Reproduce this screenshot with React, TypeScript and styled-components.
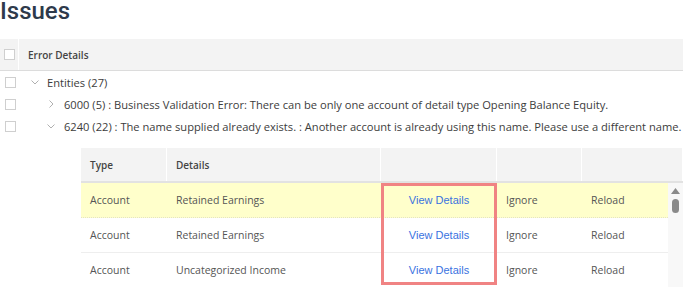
import React from 'react';
import styled, { createGlobalStyle } from 'styled-components';

const GlobalStyle = createGlobalStyle`
  body {
    margin: 0;
    background: #fff;
    overflow: hidden;
  }
`;

const Page = styled.div`
  width: 683px;
  height: 287px;
  overflow: hidden;
  font-family: 'Open Sans', sans-serif;
  color: #444;
`;

const Title = styled.h1`
  margin: 0;
  height: 39px;
  font-family: Roboto, sans-serif;
  font-weight: 500;
  font-size: 24px;
  line-height: 22px;
  color: #2e3a4b;
`;

const GridHeader = styled.div`
  display: flex;
  align-items: stretch;
  height: 31px;
  background: #f3f3f3;
  border-bottom: 1px solid #dcdcdc;
`;

const CheckCell = styled.div<{ divider?: boolean }>`
  width: 19px;
  flex: none;
  display: flex;
  align-items: center;
  padding-left: ${p => (p.divider ? 4 : 5)}px;
  box-sizing: border-box;
  border-right: ${p => (p.divider ? '1px solid #fff' : 'none')};
`;

const Checkbox = styled.span`
  display: block;
  width: 11px;
  height: 11px;
  box-sizing: border-box;
  border: 1px solid #cfcfcf;
  background: #fff;
`;

const HeaderLabel = styled.div`
  display: flex;
  align-items: center;
  padding-left: 9px;
  font-size: 10px;
  font-weight: 600;
  color: #444;
`;

const TreeRow = styled.div`
  display: flex;
  align-items: center;
  height: 22px;
  font-size: 11.15px;
  color: #3c3c3c;
  white-space: nowrap;
`;

const Toggle = styled.span<{ level: number }>`
  width: 14px;
  flex: none;
  display: flex;
  justify-content: center;
  align-items: center;
  margin-left: ${p => 9 + p.level * 16}px;
  margin-right: ${p => 5 + p.level}px;
`;

const Nested = styled.div`
  margin: 11px 0 0 81px;
  width: 602px;
`;

const COLS = '86px 214px 116px 85px 1fr';

const NestedHeader = styled.div`
  display: grid;
  grid-template-columns: ${COLS};
  height: 33px;
  background: #f3f3f3;
  border-bottom: 2px solid #e2e2e2;
`;

const HeadCell = styled.div`
  display: flex;
  align-items: center;
  padding-left: 9px;
  font-size: 10px;
  font-weight: 600;
  color: #444;
  border-right: 1px solid #fff;
`;

const Body = styled.div`
  position: relative;
  display: flex;
`;

const Rows = styled.div`
  flex: 1;
`;

const Row = styled.div<{ selected?: boolean }>`
  display: grid;
  grid-template-columns: ${COLS};
  height: 34px;
  background: ${p => (p.selected ? '#ffffcb' : '#fff')};
  border-bottom: 1px ${p => (p.selected ? 'dotted #e4e4c4' : 'solid #eeeeee')};
`;

const Cell = styled.div<{ center?: boolean }>`
  display: flex;
  align-items: center;
  justify-content: ${p => (p.center ? 'center' : 'flex-start')};
  padding-left: ${p => (p.center ? 0 : 9)}px;
  font-size: 10.5px;
  color: #555;
`;

const ViewLink = styled.a`
  font-family: 'Liberation Sans', Arial, sans-serif;
  font-size: 11px;
  color: #3a72df;
  text-decoration: none;
`;

const Highlight = styled.div`
  position: absolute;
  left: 300px;
  top: 0;
  width: 116px;
  height: 102px;
  border: 3px solid #f08383;
  box-sizing: border-box;
  pointer-events: none;
`;

const ScrollTrack = styled.div`
  width: 15px;
  flex: none;
  background: #f8f8f8;
  display: flex;
  flex-direction: column;
  align-items: center;
  padding-top: 5px;
  gap: 5px;
`;

const Thumb = styled.div`
  width: 7px;
  height: 14px;
  border-radius: 4px;
  background: #8a8a8a;
`;

function Chevron({ open }: { open: boolean }) {
  return open ? (
    <svg width="8" height="5" viewBox="0 0 8 5">
      <polyline points="0.5,0.5 4,4 7.5,0.5" fill="none" stroke="#b0b0b0" strokeWidth="1" />
    </svg>
  ) : (
    <svg width="5" height="8" viewBox="0 0 5 8">
      <polyline points="0.5,0.5 4,4 0.5,7.5" fill="none" stroke="#b0b0b0" strokeWidth="1" />
    </svg>
  );
}

const treeRows = [
  { level: 0, open: true, text: 'Entities (27)' },
  { level: 1, open: false, text: '6000 (5) : Business Validation Error: There can be only one account of detail type Opening Balance Equity.' },
  {
    level: 1,
    open: true,
    text: '6240 (22) : The name supplied already exists. : Another account is already using this name. Please use a different name.',
  },
];

const records = [
  { type: 'Account', details: 'Retained Earnings', selected: true },
  { type: 'Account', details: 'Retained Earnings' },
  { type: 'Account', details: 'Uncategorized Income' },
];

export default function App() {
  return (
    <Page>
      <GlobalStyle />
      <Title>Issues</Title>
      <GridHeader>
        <CheckCell divider>
          <Checkbox />
        </CheckCell>
        <HeaderLabel>Error Details</HeaderLabel>
      </GridHeader>
      <div>
        {treeRows.map(r => (
          <TreeRow key={r.text}>
            <CheckCell>
              <Checkbox />
            </CheckCell>
            <Toggle level={r.level}>
              <Chevron open={r.open} />
            </Toggle>
            {r.text}
          </TreeRow>
        ))}
      </div>
      <Nested>
        <NestedHeader>
          <HeadCell>Type</HeadCell>
          <HeadCell>Details</HeadCell>
          <HeadCell />
          <HeadCell />
          <HeadCell />
        </NestedHeader>
        <Body>
          <Rows>
            {records.map((r, i) => (
              <Row key={i} selected={r.selected}>
                <Cell>{r.type}</Cell>
                <Cell>{r.details}</Cell>
                <Cell center>
                  <ViewLink href="#">View Details</ViewLink>
                </Cell>
                <Cell>Ignore</Cell>
                <Cell>Reload</Cell>
              </Row>
            ))}
          </Rows>
          <ScrollTrack>
            <svg width="9" height="6" viewBox="0 0 9 6">
              <polygon points="4.5,0 9,6 0,6" fill="#8a8a8a" />
            </svg>
            <Thumb />
          </ScrollTrack>
          <Highlight />
        </Body>
      </Nested>
    </Page>
  );
}
